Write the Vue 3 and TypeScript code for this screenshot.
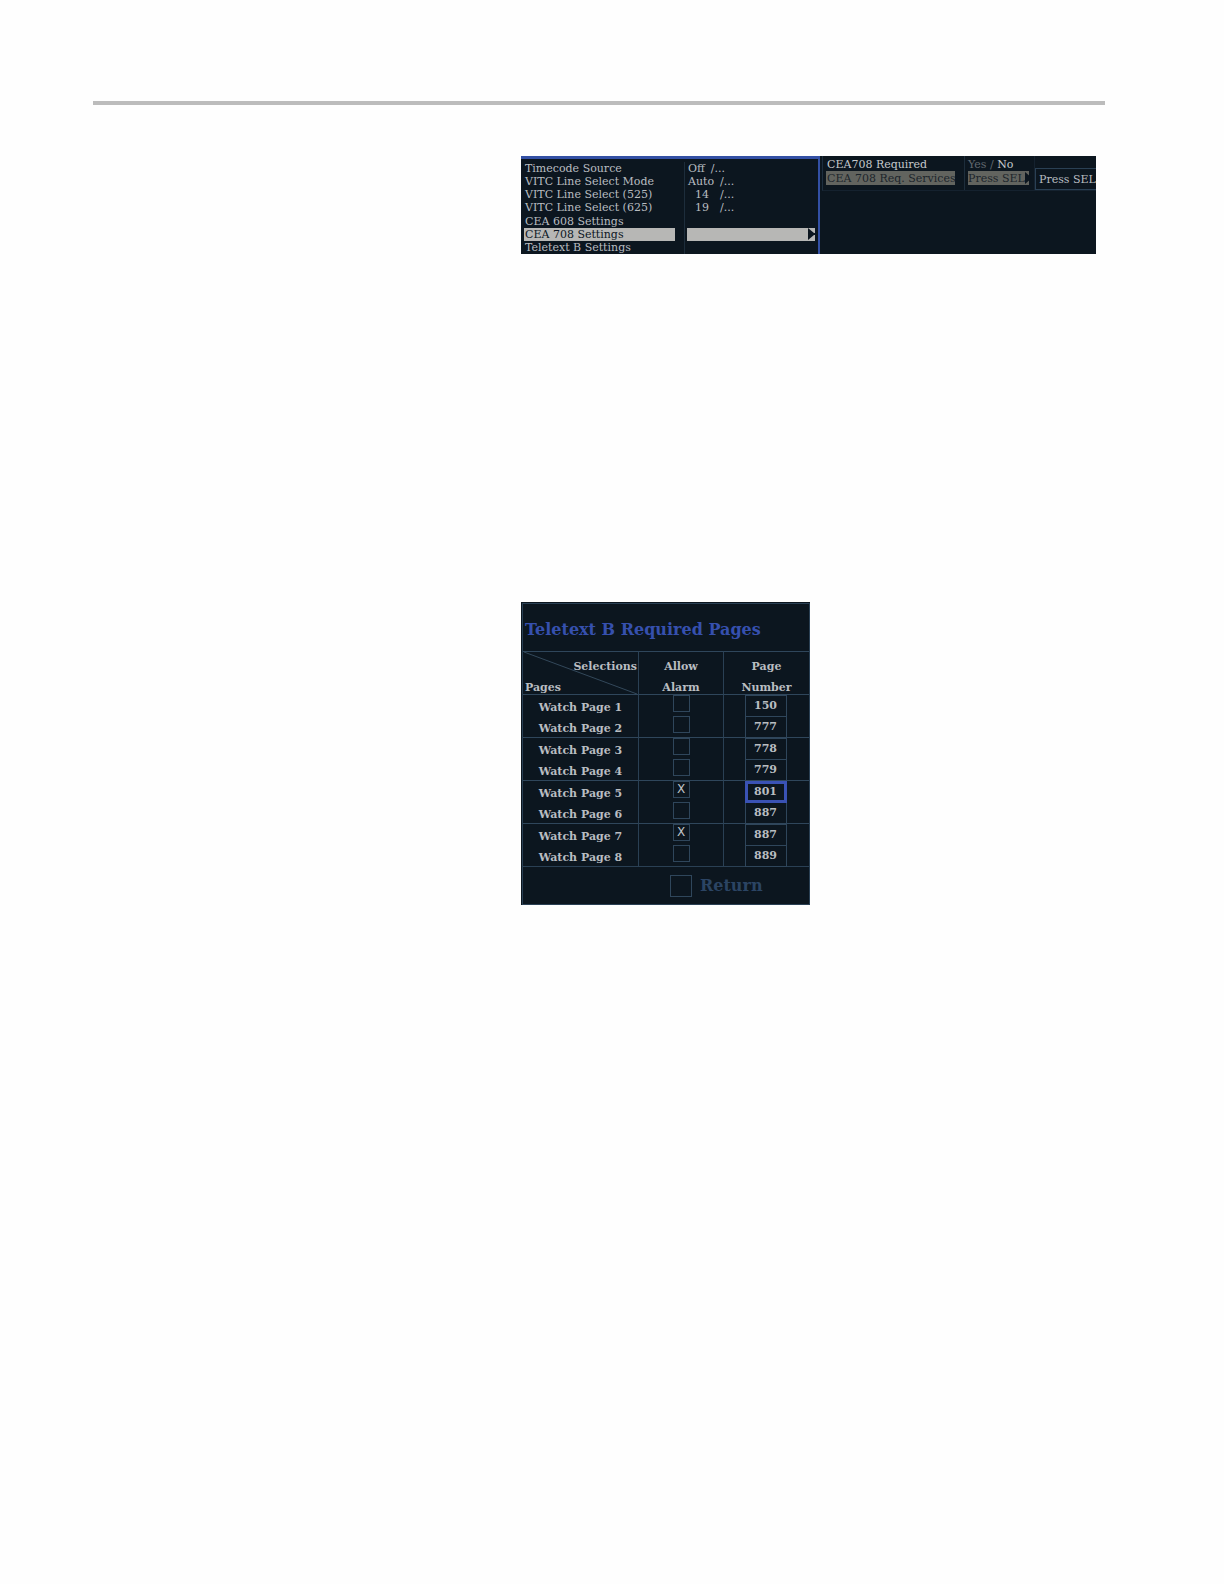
<script setup lang="ts">
import { ref } from 'vue'

interface Setting {
  name: string
  value: string
  indent?: boolean
  selected?: boolean
}

interface WatchPage {
  id: number
  alarm: boolean
  page: string
  active?: boolean
}

const settings: Setting[] = [
  { name: 'Timecode Source', value: 'Off' },
  { name: 'VITC Line Select Mode', value: 'Auto' },
  { name: 'VITC Line Select (525)', value: '14', indent: true },
  { name: 'VITC Line Select (625)', value: '19', indent: true },
  { name: 'CEA 608 Settings', value: '' },
  { name: 'CEA 708 Settings', value: '', selected: true },
  { name: 'Teletext B Settings', value: '' },
]

const pages = ref<WatchPage[]>([
  { id: 1, alarm: false, page: '150' },
  { id: 2, alarm: false, page: '777' },
  { id: 3, alarm: false, page: '778' },
  { id: 4, alarm: false, page: '779' },
  { id: 5, alarm: true, page: '801', active: true },
  { id: 6, alarm: false, page: '887' },
  { id: 7, alarm: true, page: '887' },
  { id: 8, alarm: false, page: '889' },
])

const leave = ref(false)
</script>

<template>
  <main class="sheet">
    <hr class="rule" />
    <div class="column">
      <section class="menus" aria-label="Settings menu">
        <div class="menu">
          <div v-for="s in settings" :key="s.name" class="row" :class="{ selected: s.selected }">
            <div class="name"><button type="button">{{ s.name }}</button></div>
            <div class="value">
              <span v-if="s.value" class="current" :class="{ indent: s.indent }">{{ s.value }}</span>
              <span v-if="s.value">/...</span>
              <svg v-if="s.selected" class="arrow" viewBox="0 0 7 12" aria-hidden="true">
                <path d="M0 0 6 5H7V7H6L0 12Z" />
              </svg>
            </div>
          </div>
        </div>
        <div class="submenu">
          <div class="sub-names">
            <button type="button" class="bright">CEA708 Required</button>
            <button type="button" class="dim">CEA 708 Req. Services</button>
          </div>
          <div class="sub-values">
            <div class="choice"><span>Yes /</span> <b>No</b></div>
            <button type="button" class="dim">
              Press SEL
              <svg class="arrow" viewBox="0 0 7 12" aria-hidden="true"><path d="M0 0 7 6 0 12Z" /></svg>
            </button>
          </div>
          <button type="button" class="press">Press SEL</button>
        </div>
      </section>

      <section class="teletext">
        <h2>Teletext B Required Pages</h2>
        <table>
          <colgroup>
            <col class="c-name" />
            <col class="c-alarm" />
            <col />
          </colgroup>
          <thead>
            <tr>
              <th class="corner">
                <svg viewBox="0 0 115 43" preserveAspectRatio="none" aria-hidden="true">
                  <path d="M1 0 114 43" />
                </svg>
                <div class="head">
                  <div class="right">Selections</div>
                  <div class="left">Pages</div>
                </div>
              </th>
              <th><div class="head">Allow<br />Alarm</div></th>
              <th><div class="head">Page<br />Number</div></th>
            </tr>
          </thead>
          <tbody>
            <tr v-for="p in pages" :key="p.id" :class="{ first: p.id % 2 === 1 }">
              <th scope="row"><label class="page" :for="'page-' + p.id">Watch Page {{ p.id }}</label></th>
              <td><input v-model="p.alarm" type="checkbox" class="box" :aria-label="'Allow alarm ' + p.id" /></td>
              <td>
                <input :id="'page-' + p.id" v-model="p.page" type="text" class="number" :class="{ active: p.active }" />
              </td>
            </tr>
          </tbody>
        </table>
        <label class="return"><input v-model="leave" type="checkbox" class="box large" />Return</label>
      </section>
    </div>
  </main>
</template>

<style>
body {
  margin: 0;
  background: #fefefe;
}
</style>

<style scoped>
.sheet {
  box-sizing: border-box;
  min-height: 100vh;
  padding: 101px 119px 0 93px;
  font: 11px/13px 'DejaVu Serif', serif;
  color: #b9bdc1;
}
.rule {
  height: 4px;
  margin: 0;
  border: 0;
  background: #bcbcbc;
}
.column {
  padding: 51px 9px 0 428px;
}
button {
  display: block;
  box-sizing: border-box;
  margin: 0;
  padding: 0;
  border: 0;
  background: none;
  color: inherit;
  font: inherit;
  text-align: left;
  white-space: nowrap;
}
.menus {
  display: flex;
  background: #0c161f;
}
.menu {
  box-sizing: border-box;
  flex: 0 0 299px;
  display: grid;
  grid-template-rows: repeat(7, 1fr);
  height: 98px;
  padding-top: 3px;
  border: solid #3350a4;
  border-width: 3px 2px 0 0;
}
.row {
  display: flex;
}
.name {
  box-sizing: border-box;
  width: 164px;
  padding: 0 9px 0 3px;
  border-right: 1px solid #1d2d3b;
}
.name button {
  width: 100%;
  padding-left: 1px;
}
.value {
  flex: 1;
  display: flex;
  margin: 0 3px 0 2px;
  padding-left: 1px;
}
.current {
  margin-right: 6px;
}
.indent {
  margin: 0 11px 0 7px;
}
.selected button,
.selected .value {
  background: #b7b7b5;
  color: #0c161f;
}
.arrow {
  display: block;
  flex: none;
  width: 7px;
  height: 12px;
  margin-left: auto;
  fill: #0c161f;
}
.submenu {
  box-sizing: border-box;
  flex: 1;
  display: flex;
  align-self: flex-start;
  height: 35px;
  margin-left: 2px;
  border-left: 1px solid #1d2e3e;
  border-bottom: 1px solid #15222f;
}
.sub-names {
  width: 142px;
  box-sizing: border-box;
  padding: 2px 9px 0 3px;
  border-right: 1px solid #1d2d3b;
}
.sub-names button,
.sub-values button {
  width: 100%;
  padding-left: 1px;
}
.sub-values {
  box-sizing: border-box;
  width: 70px;
  padding: 2px 5px 0 3px;
  border-right: 1px solid #15222f;
}
.sub-values button {
  padding-left: 0;
}
.bright,
.choice b {
  color: #c5c9cc;
  font-weight: 400;
}
.choice {
  color: #62696f;
  white-space: nowrap;
}
.dim {
  display: flex;
  align-items: center;
  height: 14px;
  background: #62645f;
  color: #1c242b;
}
.press {
  flex: 1;
  align-self: flex-end;
  height: 22px;
  padding-left: 3px;
  border: solid #2a4054;
  border-width: 1px 0 1px 1px;
}
.teletext {
  box-sizing: border-box;
  width: 289px;
  margin-top: 348px;
  padding: 1px 0 0 1px;
  background: #0c161f;
  font-weight: 700;
}
h2 {
  margin: 0;
  padding: 13px 2px 9px;
  border: 1px solid #2a4054;
  border-bottom: 0;
  color: #3650ae;
  font-size: 16px;
  line-height: 25px;
  white-space: nowrap;
}
table {
  width: 100%;
  table-layout: fixed;
  border-collapse: separate;
  border-spacing: 0;
  border-left: 1px solid #2a4054;
  border-right: 1px solid #2a4054;
}
.c-name {
  width: 116px;
}
.c-alarm {
  width: 85px;
}
th,
td {
  height: 21px;
  padding: 0;
  border-right: 1px solid #2a4054;
  line-height: 21px;
  text-align: center;
  vertical-align: top;
}
th:last-child,
td:last-child {
  border-right: 0;
}
td:last-child {
  padding-right: 2px;
}
thead th,
.first > * {
  border-top: 1px solid #2f465b;
}
.head {
  position: relative;
  height: 38px;
  padding-top: 4px;
}
.corner {
  position: relative;
}
.corner svg {
  position: absolute;
  inset: 0;
  width: 100%;
  height: 100%;
  fill: none;
  stroke: #34495b;
}
.right {
  padding-right: 1px;
  text-align: right;
}
.left {
  padding-left: 2px;
  text-align: left;
}
.page {
  display: block;
  height: 19px;
  padding-top: 2px;
}
td {
  line-height: 0;
}
.box {
  appearance: none;
  display: inline-grid;
  place-items: center;
  box-sizing: border-box;
  width: 17px;
  height: 17px;
  margin: 0;
  border: 1px solid #2f465b;
  background: #0c161f;
}
.box:checked::before {
  content: 'X';
  color: #c0c4c8;
  font: 12px/15px 'DejaVu Sans', sans-serif;
}
.number {
  position: relative;
  box-sizing: border-box;
  width: 42px;
  height: 22px;
  margin: 0 0 -1px;
  padding: 0 0 2px;
  border: 1px solid #2f465b;
  background: #0c161f;
  color: inherit;
  font: inherit;
  font-weight: 700;
  text-align: center;
}
.number.active {
  z-index: 1;
  border: 3px solid #3a52b4;
}
.return {
  display: flex;
  align-items: center;
  gap: 8px;
  height: 37px;
  padding-left: 147px;
  border: 1px solid #2a4054;
  color: #2b4463;
  font-size: 16px;
}
.large {
  width: 22px;
  height: 22px;
}
</style>
